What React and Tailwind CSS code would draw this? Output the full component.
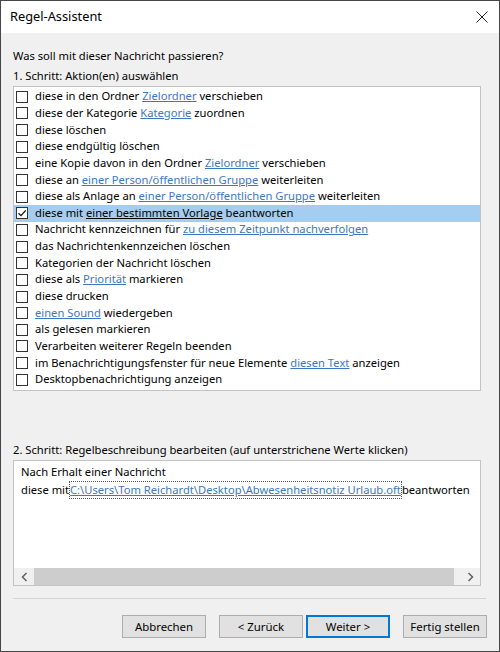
import React from 'react';

// Aktionen der ersten Seite des Regel-Assistenten; Teile mit link:true sind unterstrichene Werte.
const AKTIONEN = [
  [['diese in den Ordner '], ['Zielordner', true], [' verschieben']],
  [['diese der Kategorie '], ['Kategorie', true], [' zuordnen']],
  [['diese löschen']],
  [['diese endgültig löschen']],
  [['eine Kopie davon in den Ordner '], ['Zielordner', true], [' verschieben']],
  [['diese an '], ['einer Person/öffentlichen Gruppe', true], [' weiterleiten']],
  [['diese als Anlage an '], ['einer Person/öffentlichen Gruppe', true], [' weiterleiten']],
  [['diese mit '], ['einer bestimmten Vorlage', true], [' beantworten']],
  [['Nachricht kennzeichnen für '], ['zu diesem Zeitpunkt nachverfolgen', true]],
  [['das Nachrichtenkennzeichen löschen']],
  [['Kategorien der Nachricht löschen']],
  [['diese als '], ['Priorität', true], [' markieren']],
  [['diese drucken']],
  [['einen Sound', true], [' wiedergeben']],
  [['als gelesen markieren']],
  [['Verarbeiten weiterer Regeln beenden']],
  [['im Benachrichtigungsfenster für neue Elemente '], ['diesen Text', true], [' anzeigen']],
  [['Desktopbenachrichtigung anzeigen']]
];

const AUSGEWAEHLT = 7;

function Checkbox({ checked }) {
  return (
    <span className="flex h-[12px] w-[12px] shrink-0 items-center justify-center border border-[#333] bg-white">
      {checked && (
        <svg width="10" height="10" viewBox="0 0 10 10">
          <path d="M1.5 5.2 L4 7.6 L8.7 2.4" fill="none" stroke="#111" strokeWidth="1.3" />
        </svg>
      )}
    </span>
  );
}

function Button({ children, primary }) {
  return (
    <button
      type="button"
      className={`h-[23px] w-[84px] border bg-[#e1e1e1] text-[11.4px] text-black ${primary ? 'border-[#0078d7] shadow-[inset_0_0_0_1px_#0078d7]' : 'border-[#adadad]'}`}
    >
      {children}
    </button>
  );
}

export default function App() {
  return (
    <div
      className="box-border flex h-[652px] w-[500px] flex-col border border-[#474747] bg-[#f0f0f0] text-black"
      style={{ fontFamily: '"Noto Sans", "Liberation Sans", sans-serif' }}
    >
      <div className="flex h-[32px] shrink-0 items-center justify-between bg-white pl-[9px] pr-[11px]">
        <span className="text-[12.8px]">Regel-Assistent</span>
        <svg width="12" height="12" viewBox="0 0 12 12">
          <path d="M0.5 0.5 L11.5 11.5 M11.5 0.5 L0.5 11.5" stroke="#222" strokeWidth="1" />
        </svg>
      </div>

      <div className="flex flex-1 flex-col px-[12px] text-[11.2px]">
        <div className="mt-[13px] flex h-[20px] items-center">Was soll mit dieser Nachricht passieren?</div>
        <div className="flex h-[20px] items-center">1. Schritt: Aktion(en) auswählen</div>

        <div className="h-[305px] w-[468px] border border-[#c3c3c3] bg-white pt-[1.3px]">
          {AKTIONEN.map((teile, i) => (
            <div
              key={i}
              className={`flex h-[16.67px] items-center gap-[7px] pl-[2px] ${i === AUSGEWAEHLT ? 'bg-[#a4cdef]' : ''}`}
            >
              <Checkbox checked={i === AUSGEWAEHLT} />
              <span className="whitespace-pre">
                {teile.map(([text, link], j) =>
                  link ? (
                    <span key={j} className={`underline ${i === AUSGEWAEHLT ? 'text-black' : 'text-[#3d77c1]'}`}>{text}</span>
                  ) : (
                    <span key={j}>{text}</span>
                  )
                )}
              </span>
            </div>
          ))}
        </div>

        <div className="mt-[49px] flex h-[20px] items-center">2. Schritt: Regelbeschreibung bearbeiten (auf unterstrichene Werte klicken)</div>

        <div className="flex h-[126px] w-[468px] flex-col border border-[#c3c3c3] bg-white">
          <div className="flex-1 pl-[7px] pt-[2px]">
            <div className="flex h-[18px] items-center">Nach Erhalt einer Nachricht</div>
            <div className="flex h-[18px] items-center whitespace-pre">
              <span>diese mit</span>
              <span className="border border-dotted border-[#555] text-[#3d77c1] underline">C:\Users\Tom Reichardt\Desktop\Abwesenheitsnotiz Urlaub.oft</span>
              <span>beantworten</span>
            </div>
          </div>
          {/* horizontale Bildlaufleiste */}
          <div className="flex h-[17px] items-stretch bg-[#f0f0f0]">
            <div className="flex w-[20px] items-center justify-center">
              <svg width="7" height="10" viewBox="0 0 7 10">
                <path d="M5.5 1 L1.5 5 L5.5 9" fill="none" stroke="#606060" strokeWidth="1.5" />
              </svg>
            </div>
            <div className="w-[420px] bg-[#cdcdcd]" />
            <div className="flex-1" />
            <div className="flex w-[20px] items-center justify-center">
              <svg width="7" height="10" viewBox="0 0 7 10">
                <path d="M1.5 1 L5.5 5 L1.5 9" fill="none" stroke="#606060" strokeWidth="1.5" />
              </svg>
            </div>
          </div>
        </div>

        <div className="mt-[12px] h-px w-[473px] bg-[#d4d4d4]" />

        <div className="mt-[16px] flex justify-end">
          <div className="flex gap-[13px]">
            <Button>Abbrechen</Button>
            <div className="flex gap-[3px]">
              <Button>&lt; Zurück</Button>
              <Button primary>Weiter &gt;</Button>
            </div>
            <Button>Fertig stellen</Button>
          </div>
        </div>
      </div>
    </div>
  );
}
